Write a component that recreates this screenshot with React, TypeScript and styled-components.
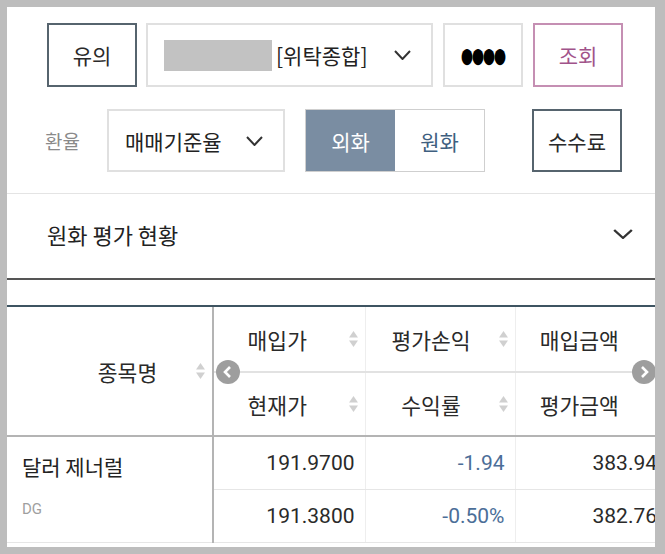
import React from 'react'
import styled, { createGlobalStyle } from 'styled-components'

const GlobalStyle = createGlobalStyle`
  html, body {
    margin: 0;
    padding: 0;
    background: #bdbdbd;
  }
  body {
    font-family: 'Noto Sans CJK KR', 'Noto Sans', sans-serif;
    color: #222;
  }
`

const Panel = styled.div`
  margin: 7px 0 0 7px;
  width: 648px;
  height: 540px;
  background: #fff;
  overflow: hidden;
`

const Controls = styled.div`
  padding: 16px 0 0 40px;
  display: flex;
  flex-direction: column;
  gap: 22px;
  height: 187px;
  box-sizing: border-box;
  border-bottom: 1px solid #e4e4e4;
`

const Row = styled.div`
  display: flex;
  align-items: center;
`

const Button = styled.button<{ $tone?: 'dark' | 'pink' | 'light'; $w: number; $ml?: number; $h?: number }>`
  width: ${(p) => p.$w}px;
  height: ${(p) => p.$h ?? 64}px;
  margin-left: ${(p) => p.$ml ?? 0}px;
  box-sizing: border-box;
  background: #fff;
  border: 2px solid
    ${(p) => (p.$tone === 'pink' ? '#c58fb3' : p.$tone === 'light' ? '#e0e0e0' : '#56646e')};
  color: ${(p) => (p.$tone === 'pink' ? '#a1538a' : '#2a2a2a')};
  font-family: 'Noto Sans CJK KR', sans-serif;
  font-size: 21px;
  padding: 0;
  display: flex;
  align-items: center;
  justify-content: center;
`

const Select = styled.div<{ $w: number; $ml?: number; $h?: number }>`
  width: ${(p) => p.$w}px;
  height: ${(p) => p.$h ?? 64}px;
  margin-left: ${(p) => p.$ml ?? 0}px;
  box-sizing: border-box;
  border: 2px solid #e0e0e0;
  display: flex;
  align-items: center;
  padding: 0 20px 0 16px;
  font-size: 21px;
  color: #222;
`

const Masked = styled.div`
  width: 108px;
  height: 31px;
  background: #c2c2c2;
  margin-right: 4px;
`

const SelectText = styled.span`
  flex: 1;
  white-space: nowrap;
`

const Dots = styled.span`
  font-size: 12px;
  letter-spacing: -1px;
  display: inline-block;
  transform: scaleY(1.5);
  color: #000;
`

const Label = styled.span`
  width: 62px;
  margin-left: -2px;
  font-size: 19px;
  color: #8a8a8a;
`

const Toggle = styled.div`
  display: flex;
  margin-left: 20px;
  height: 63px;
  box-sizing: border-box;
  border: 1px solid #cfcfcf;
`

const ToggleItem = styled.div<{ $on?: boolean; $w: number }>`
  width: ${(p) => p.$w}px;
  display: flex;
  align-items: center;
  justify-content: center;
  font-size: 21px;
  background: ${(p) => (p.$on ? '#7a8da2' : '#fff')};
  color: ${(p) => (p.$on ? '#fff' : '#3f5f80')};
`

const SectionHead = styled.div`
  height: 86px;
  box-sizing: border-box;
  display: flex;
  align-items: center;
  justify-content: space-between;
  padding: 0 22px 4px 40px;
  font-size: 22px;
  color: #222;
  border-bottom: 2px solid #555;
`

const TableWrap = styled.div`
  margin-top: 25px;
  border-top: 2px solid #3e5461;
  position: relative;
  width: 658px;
`

const Table = styled.table`
  border-collapse: collapse;
  table-layout: fixed;
  width: 658px;
`

const Th = styled.th<{ $first?: boolean; $top?: boolean }>`
  height: ${(p) => (p.$top ? 64 : 62)}px;
  padding: 0;
  font-weight: 400;
  font-size: 21.5px;
  color: #2a2a2a;
  border-left: ${(p) => (p.$first ? 'none' : '1px solid #eeeeee')};
  border-right: ${(p) => (p.$first ? '2px solid #b4b4b4' : 'none')};
  border-bottom: 2px solid ${(p) => (p.$top ? '#e2e2e2' : '#b4b4b4')};
  ${(p) => (p.$first ? 'border-bottom: 2px solid #b4b4b4;' : '')}
`

const HeadInner = styled.div<{ $pl?: number; $pr?: number }>`
  display: flex;
  align-items: center;
  justify-content: center;
  position: relative;
  padding-left: ${(p) => p.$pl ?? 0}px;
  padding-right: ${(p) => p.$pr ?? 0}px;
`

const SortIcon = styled.svg<{ $right: number }>`
  position: absolute;
  right: ${(p) => p.$right}px;
  top: 50%;
  margin-top: -8px;
`

const Td = styled.td<{ $blue?: boolean; $last?: boolean }>`
  height: 52px;
  padding: 0 ${(p) => (p.$last ? 0 : 10)}px 0 ${(p) => (p.$last ? 77 : 0)}px;
  text-align: ${(p) => (p.$last ? 'left' : 'right')};
  vertical-align: middle;
  font-family: Roboto, 'Noto Sans', sans-serif;
  font-size: 21px;
  line-height: 24px;
  color: ${(p) => (p.$blue ? '#4b6e98' : '#2a2a2a')};
  border-left: 1px solid #eeeeee;
  border-bottom: 1px solid #e6e6e6;
  white-space: nowrap;
  overflow: hidden;
`

const NameCell = styled.td`
  border-right: 2px solid #b4b4b4;
  border-bottom: 1px solid #e6e6e6;
  padding: 14px 0 0 15px;
  vertical-align: top;
`

const Name = styled.div`
  font-size: 21px;
  line-height: 30px;
  color: #222;
`

const Code = styled.div`
  margin-top: 18px;
  font-family: Roboto, sans-serif;
  font-size: 15px;
  line-height: 20px;
  color: #9f9f9f;
`

const Nav = styled.div<{ $left: number }>`
  position: absolute;
  left: ${(p) => p.$left}px;
  top: 53px;
  width: 24px;
  height: 24px;
  border-radius: 50%;
  background: #9e9e9e;
  display: flex;
  align-items: center;
  justify-content: center;
`

const Chevron = ({ w = 17 }: { w?: number }) => (
  <svg width={w} height={10} viewBox='0 0 17 10' preserveAspectRatio='none'>
    <polyline points='1,1 8.5,9 16,1' fill='none' stroke='#333' strokeWidth='2' />
  </svg>
)

const Sort = ({ right }: { right: number }) => (
  <SortIcon $right={right} width='9' height='16' viewBox='0 0 9 16'>
    <polygon points='4.5,0 9,6.5 0,6.5' fill='#d0d0d0' />
    <polygon points='0,9.5 9,9.5 4.5,16' fill='#d0d0d0' />
  </SortIcon>
)

const headers = [
  { top: '매입가', bottom: '현재가', pr: 24, sort: true },
  { top: '평가손익', bottom: '수익률', pr: 18, sort: true },
  { top: '매입금액', bottom: '평가금액', pr: 22, sort: false },
]

export default function App() {
  return (
    <>
      <GlobalStyle />
      <Panel>
        <Controls>
          <Row>
            <Button $w={90}>유의</Button>
            <Select $w={287} $ml={9}>
              <Masked />
              <SelectText>[위탁종합]</SelectText>
              <Chevron />
            </Select>
            <Button $tone='light' $w={80} $ml={10}>
              <Dots>●●●●</Dots>
            </Button>
            <Button $tone='pink' $w={90} $ml={10}>
              조회
            </Button>
          </Row>
          <Row>
            <Label>환율</Label>
            <Select $w={178} $h={63}>
              <SelectText>매매기준율</SelectText>
              <Chevron />
            </Select>
            <Toggle>
              <ToggleItem $on $w={89}>
                외화
              </ToggleItem>
              <ToggleItem $w={89}>원화</ToggleItem>
            </Toggle>
            <Button $w={90} $ml={47} $h={63}>
              수수료
            </Button>
          </Row>
        </Controls>
        <SectionHead>
          <span>원화 평가 현황</span>
          <Chevron w={20} />
        </SectionHead>
        <TableWrap>
          <Table>
            <colgroup>
              <col style={{ width: 206 }} />
              <col style={{ width: 152 }} />
              <col style={{ width: 150 }} />
              <col style={{ width: 150 }} />
            </colgroup>
            <thead>
              <tr>
                <Th $first rowSpan={2}>
                  <HeadInner $pl={36}>
                    종목명
                    <Sort right={7} />
                  </HeadInner>
                </Th>
                {headers.map((h) => (
                  <Th $top key={h.top}>
                    <HeadInner $pr={h.pr}>
                      {h.top}
                      {h.sort && <Sort right={7} />}
                    </HeadInner>
                  </Th>
                ))}
              </tr>
              <tr>
                {headers.map((h) => (
                  <Th key={h.bottom}>
                    <HeadInner $pr={h.pr}>
                      {h.bottom}
                      {h.sort && <Sort right={7} />}
                    </HeadInner>
                  </Th>
                ))}
              </tr>
            </thead>
            <tbody>
              <tr>
                <NameCell rowSpan={2}>
                  <Name>달러 제너럴</Name>
                  <Code>DG</Code>
                </NameCell>
                <Td>191.9700</Td>
                <Td $blue>-1.94</Td>
                <Td $last>383.94</Td>
              </tr>
              <tr>
                <Td>191.3800</Td>
                <Td $blue>-0.50%</Td>
                <Td $last>382.76</Td>
              </tr>
            </tbody>
          </Table>
          <Nav $left={209}>
            <svg width='10' height='12' viewBox='0 0 10 12'>
              <polyline points='7,1 2,6 7,11' fill='none' stroke='#fff' strokeWidth='2.6' />
            </svg>
          </Nav>
          <Nav $left={625}>
            <svg width='10' height='12' viewBox='0 0 10 12'>
              <polyline points='3,1 8,6 3,11' fill='none' stroke='#fff' strokeWidth='2.6' />
            </svg>
          </Nav>
        </TableWrap>
      </Panel>
    </>
  )
}
